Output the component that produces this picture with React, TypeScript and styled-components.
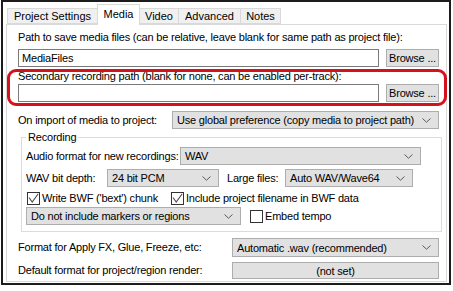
import React from "react";
import styled, { createGlobalStyle } from "styled-components";

const GlobalStyle = createGlobalStyle`
  html, body {
    margin: 0;
    padding: 0;
    background: #fff;
  }
  body {
    font-family: "Liberation Sans", Arial, sans-serif;
    font-size: 11px;
    letter-spacing: -0.2px;
    color: #000;
  }
  * {
    box-sizing: border-box;
  }
`;

function Chevron() {
  return (
    <svg width="9" height="5" viewBox="0 0 9 5">
      <path d="M0.5 0.5 L4.5 4.2 L8.5 0.5" fill="none" stroke="#5a5a5a" strokeWidth="1" />
    </svg>
  );
}

function Check({ checked }: { checked?: boolean }) {
  return (
    <Box>
      {checked && (
        <svg width="11" height="11" viewBox="0 0 11 11">
          <path d="M1 4.5 L4.2 9 L10.2 0.8" fill="none" stroke="#4a4a4a" strokeWidth="1.1" />
        </svg>
      )}
    </Box>
  );
}

function Select({ w, h = 18, value }: { w: number; h?: number; value: string }) {
  return (
    <DropDown $w={w} $h={h}>
      <span>{value}</span>
      <Chevron />
    </DropDown>
  );
}

function App() {
  return (
    <>
      <GlobalStyle />
      <Frame>
        <TabBar>
          <Tab $w={91}>Project Settings</Tab>
          <Tab $w={43} $active>
            Media
          </Tab>
          <Tab $w={40}>Video</Tab>
          <Tab $w={63}>Advanced</Tab>
          <Tab $w={41}>Notes</Tab>
        </TabBar>
        <Panel>
          <Label>Path to save media files (can be relative, leave blank for same path as project file):</Label>
          <Row $h={18} $mt={5}>
            <PathInput readOnly value="MediaFiles" />
            <BrowseButton>Browse ...</BrowseButton>
          </Row>

          {/* red annotation ring */}
          <Highlight>
            <Label>Secondary recording path (blank for none, can be enabled per-track):</Label>
            <Row $h={18} $mt={1}>
              <PathInput readOnly value="" />
              <BrowseButton>Browse ...</BrowseButton>
            </Row>
          </Highlight>

          <Row $h={18} $mt={9}>
            <Label>On import of media to project:</Label>
            <Push>
              <Select w={267} value="Use global preference (copy media to project path)" />
            </Push>
          </Row>

          <Group>
            <GroupTitle>Recording</GroupTitle>
            <Row $h={18} $mt={3}>
              <Label $w={154}>Audio format for new recordings:</Label>
              <Select w={241} value="WAV" />
            </Row>
            <Row $h={18} $mt={4}>
              <Label $w={81}>WAV bit depth:</Label>
              <Select w={112} value="24 bit PCM" />
              <Label $w={58} $ml={8}>
                Large files:
              </Label>
              <Select w={128} value="Auto WAV/Wave64" />
            </Row>
            <Row $h={14} $mt={4}>
              <CheckItem $w={144} $ml={1}>
                <Check checked />
                <span>Write BWF ('bext') chunk</span>
              </CheckItem>
              <CheckItem>
                <Check checked />
                <span>Include project filename in BWF data</span>
              </CheckItem>
            </Row>
            <Row $h={18} $mt={2}>
              <Select w={215} value="Do not include markers or regions" />
              <CheckItem $ml={9}>
                <Check />
                <span>Embed tempo</span>
              </CheckItem>
            </Row>
          </Group>

          <Row $h={19} $mt={6}>
            <Label>Format for Apply FX, Glue, Freeze, etc:</Label>
            <Push>
              <Select w={207} h={19} value="Automatic .wav (recommended)" />
            </Push>
          </Row>
          <Row $h={17} $mt={5}>
            <Label>Default format for project/region render:</Label>
            <Push>
              <ValueButton>(not set)</ValueButton>
            </Push>
          </Row>
        </Panel>
      </Frame>
    </>
  );
}

export default App;

const Frame = styled.div`
  width: 450px;
  height: 285px;
  margin-left: 1px;
  border: 2px solid #1c1c1c;
  padding-left: 3px;
  background: #fff;
  display: flex;
  flex-direction: column;
`;

const TabBar = styled.div`
  display: flex;
  align-items: flex-end;
  height: 20px;
  margin-top: 2px;
  padding-left: 1px;
`;

const Tab = styled.div<{ $w: number; $active?: boolean }>`
  width: ${({ $w }) => $w}px;
  height: ${({ $active }) => ($active ? 21 : 16)}px;
  margin-right: -1px;
  margin-bottom: ${({ $active }) => ($active ? -1 : 0)}px;
  border: 1px solid #d9d9d9;
  border-bottom: ${({ $active }) => ($active ? "none" : "1px solid #d9d9d9")};
  background: ${({ $active }) => ($active ? "#fff" : "#f0f0f0")};
  display: flex;
  align-items: center;
  justify-content: center;
  padding-bottom: ${({ $active }) => ($active ? 3 : 0)}px;
  letter-spacing: 0;
  white-space: nowrap;
  position: relative;
  z-index: ${({ $active }) => ($active ? 1 : 0)};
`;

const Panel = styled.div`
  width: 441px;
  height: 258px;
  border: 1px solid #d9d9d9;
  background: #fff;
  padding: 6px 7px 0 11px;
  display: flex;
  flex-direction: column;
`;

const Label = styled.div<{ $w?: number; $ml?: number }>`
  line-height: 13px;
  white-space: nowrap;
  flex: none;
  width: ${({ $w }) => ($w ? `${$w}px` : "auto")};
  margin-left: ${({ $ml }) => $ml ?? 0}px;
`;

const Row = styled.div<{ $h: number; $mt: number }>`
  display: flex;
  align-items: center;
  height: ${({ $h }) => $h}px;
  margin-top: ${({ $mt }) => $mt}px;
`;

const Push = styled.div`
  margin-left: auto;
  display: flex;
`;

const PathInput = styled.input`
  flex: 1;
  height: 18px;
  margin: 0;
  padding: 0 3px;
  border: 1px solid #7a7a7a;
  background: #fff;
  font: inherit;
  letter-spacing: inherit;
  color: #000;
  outline: none;
`;

const BrowseButton = styled.button`
  width: 53px;
  height: 18px;
  margin: 0 0 0 7px;
  padding: 0;
  border: 1px solid #adadad;
  background: #e1e1e1;
  font: inherit;
  letter-spacing: inherit;
  color: #000;
`;

const Highlight = styled.div`
  position: relative;
  margin-top: 3px;

  &::before {
    content: "";
    position: absolute;
    top: -1px;
    bottom: -4px;
    left: -11px;
    right: -8px;
    border: 3px solid #d5121c;
    border-radius: 9px;
    pointer-events: none;
  }
`;

const DropDown = styled.div<{ $w: number; $h: number }>`
  width: ${({ $w }) => $w}px;
  height: ${({ $h }) => $h}px;
  flex: none;
  display: flex;
  align-items: center;
  justify-content: space-between;
  padding: 0 7px 0 4px;
  border: 1px solid #adadad;
  background: #e1e1e1;
  white-space: nowrap;
  overflow: hidden;

  svg {
    flex: none;
  }
`;

const ValueButton = styled.div`
  width: 207px;
  height: 17px;
  display: flex;
  align-items: center;
  justify-content: center;
  border: 1px solid #adadad;
  background: #e1e1e1;
`;

const Group = styled.fieldset`
  margin: 2px -3px 0 3px;
  padding: 0 4px 6px;
  border: 1px solid #dcdcdc;
  min-width: 0;
`;

const GroupTitle = styled.legend`
  padding: 0 2px;
  line-height: 13px;
`;

const CheckItem = styled.label<{ $w?: number; $ml?: number }>`
  display: flex;
  align-items: center;
  gap: 2px;
  flex: none;
  width: ${({ $w }) => ($w ? `${$w}px` : "auto")};
  margin-left: ${({ $ml }) => $ml ?? 0}px;
  line-height: 13px;
  white-space: nowrap;
`;

const Box = styled.span`
  width: 13px;
  height: 13px;
  flex: none;
  border: 1px solid #333;
  background: #fff;
  display: flex;
  align-items: center;
  justify-content: center;
`;
